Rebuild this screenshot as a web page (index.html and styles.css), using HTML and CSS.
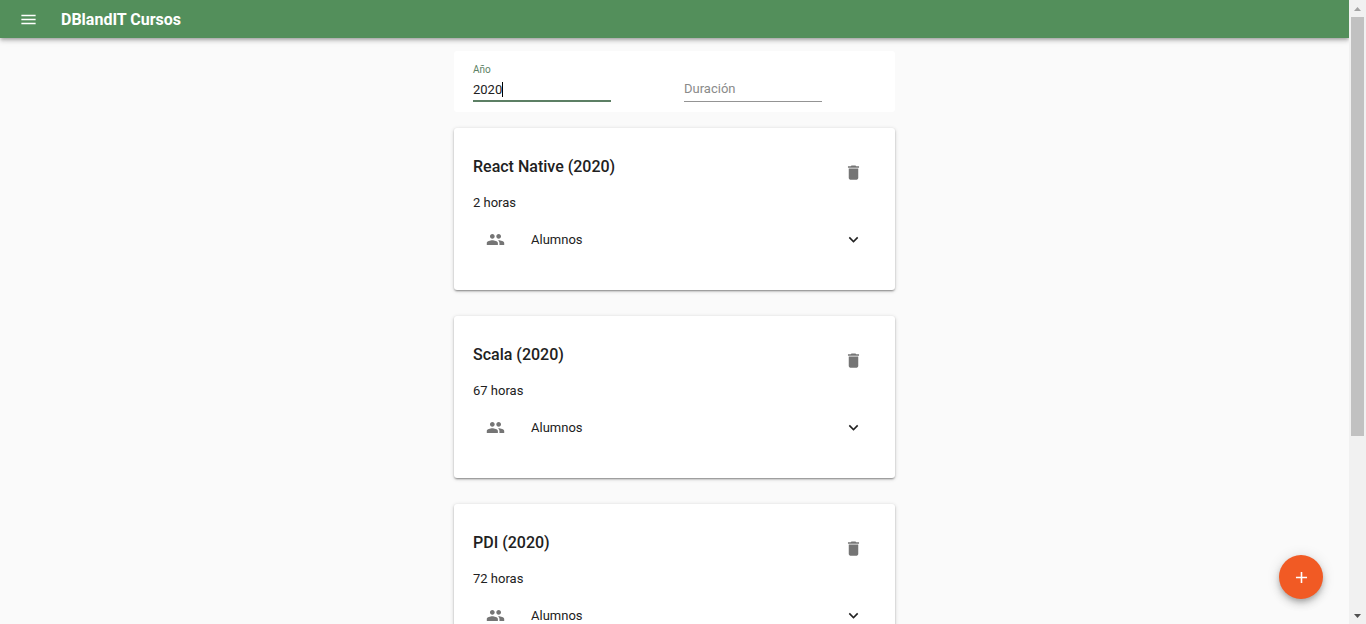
FILE: index.html
```html
<!DOCTYPE html>
<html lang="es">
<head>
<meta charset="utf-8">
<title>DBlandIT Cursos</title>
<link rel="stylesheet" href="styles.css">
</head>
<body>
<svg class="sprite" aria-hidden="true">
  <symbol id="trash" viewBox="0 0 24 24"><path d="M6 19c0 1.100.9 2 2 2h8c1.100 0 2-.9 2-2V7H6v12zM19 4h-3.500l-1-1h-5l-1 1H5v2h14V4z"/></symbol>
  <symbol id="people" viewBox="0 0 24 24"><path d="M16 11c1.660 0 2.990-1.340 2.990-3S17.660 5 16 5c-1.660 0-3 1.340-3 3s1.340 3 3 3zm-8 0c1.660 0 2.990-1.340 2.990-3S9.660 5 8 5C6.340 5 5 6.340 5 8s1.340 3 3 3zm0 2c-2.330 0-7 1.170-7 3.500V19h14v-2.500c0-2.330-4.670-3.500-7-3.500zm8 0c-.29 0-.62.020-.97.050 1.160.84 1.970 1.970 1.970 3.450V19h6v-2.500c0-2.330-4.670-3.500-7-3.500z"/></symbol>
  <symbol id="more" viewBox="0 0 24 24"><path d="M16.590 8.590L12 13.170 7.410 8.590 6 10l6 6 6-6z"/></symbol>
</svg>
<div class="shell">
  <div class="page">
    <header class="appbar">
      <button class="icon-button menu" type="button" aria-label="Menú"><svg class="icon" viewBox="0 0 24 24"><path d="M3 18h18v-2H3v2zm0-5h18v-2H3v2zm0-7v2h18V6H3z"/></svg></button>
      <h1 class="brand">DBlandIT Cursos</h1>
    </header>
    <main class="content">
      <form class="filters">
        <div class="field focused">
          <label class="label" for="year">Año</label>
          <input class="input" id="year" type="text" value="2020">
          <span class="caret"></span>
        </div>
        <div class="field">
          <label class="label hidden" for="duration">Duración</label>
          <input class="input" id="duration" type="text" placeholder="Duración">
        </div>
      </form>
      <article class="card">
        <div class="card-head"><h2 class="title">React Native (2020)</h2><button class="icon-button" type="button" aria-label="Eliminar"><svg class="icon"><use href="#trash"/></svg></button></div>
        <p class="hours">2 horas</p>
        <button class="students" type="button"><svg class="icon people"><use href="#people"/></svg><span class="students-label">Alumnos</span><svg class="icon more"><use href="#more"/></svg></button>
      </article>
      <article class="card">
        <div class="card-head"><h2 class="title">Scala (2020)</h2><button class="icon-button" type="button" aria-label="Eliminar"><svg class="icon"><use href="#trash"/></svg></button></div>
        <p class="hours">67 horas</p>
        <button class="students" type="button"><svg class="icon people"><use href="#people"/></svg><span class="students-label">Alumnos</span><svg class="icon more"><use href="#more"/></svg></button>
      </article>
      <article class="card">
        <div class="card-head"><h2 class="title">PDI (2020)</h2><button class="icon-button" type="button" aria-label="Eliminar"><svg class="icon"><use href="#trash"/></svg></button></div>
        <p class="hours">72 horas</p>
        <button class="students" type="button"><svg class="icon people"><use href="#people"/></svg><span class="students-label">Alumnos</span><svg class="icon more"><use href="#more"/></svg></button>
      </article>
    </main>
    <button class="fab" type="button" aria-label="Agregar curso"><svg class="icon" viewBox="0 0 24 24"><path d="M19 13h-6v6h-2v-6H5v-2h6V5h2v6h6v2z"/></svg></button>
  </div>
  <div class="scrollbar" aria-hidden="true">
    <svg class="arrow up" viewBox="0 0 17 17"><path d="M5 11L8.500 7L12 11z"/></svg>
    <div class="track"><div class="thumb"></div></div>
    <svg class="arrow" viewBox="0 0 17 17"><path d="M5 7L8.500 11L12 7z"/></svg>
  </div>
</div>
</body>
</html>
```
FILE: styles.css
```css
* { box-sizing: border-box; }

body {
  margin: 0;
  background: #fafafa;
  color: #212121;
  font-family: Roboto, "Liberation Sans", sans-serif;
  font-size: 13px;
  line-height: 20px;
}

button, input { font: inherit; color: inherit; border: 0; background: none; padding: 0; }
button { cursor: pointer; }
h1, h2, p { margin: 0; }

.sprite { position: absolute; width: 0; height: 0; }

.shell { display: flex; height: 100vh; }
.page { position: relative; flex: 1; min-width: 0; overflow: hidden; }

.icon { display: block; width: 19px; height: 19px; fill: currentColor; flex: none; }

.appbar {
  display: flex;
  align-items: center;
  gap: 23px;
  height: 38px;
  padding: 0 19px;
  background: #538f5b;
  color: #fff;
  box-shadow: 0 2px 3px -1px rgba(0, 0, 0, .2), 0 3px 4px rgba(0, 0, 0, .14), 0 1px 8px rgba(0, 0, 0, .12);
}
.brand { font-size: 16px; line-height: 21px; font-weight: 700; }

.content { width: 441px; max-width: 100%; margin: 0 auto; padding-top: 13px; }

.filters {
  display: grid;
  grid-template-columns: 1fr 1fr;
  gap: 0 20px;
  padding: 11px 20px 10px 19px;
  margin-bottom: 16px;
  border-radius: 3px;
  background: #fff;
}
.field { position: relative; width: 138px; }
.label { display: block; height: 16px; font-size: 10px; line-height: 16px; color: #5c7f64; }
.hidden { visibility: hidden; }
.input { display: block; width: 100%; height: 24px; padding-bottom: 2px; border-bottom: 1px solid #949494; border-radius: 0; outline: 0; }
.input::placeholder { color: #8a8a8a; opacity: 1; }
.focused .input { padding-bottom: 0; border-bottom: 2px solid #5c7f64; }
.caret { position: absolute; left: 29px; top: 20px; width: 1px; height: 15px; background: #000; }

.card {
  min-height: 162px;
  padding: 26px 19px;
  margin-bottom: 26px;
  border-radius: 3px;
  background: #fff;
  box-shadow: 0 2px 2px -1px rgba(0, 0, 0, .24), 0 1px 2px rgba(0, 0, 0, .2), 0 1px 4px rgba(0, 0, 0, .16);
}
.card-head { display: flex; justify-content: space-between; padding-right: 13px; }
.title { font-size: 16px; line-height: 26px; font-weight: 500; }
.icon-button { display: block; color: #757575; }
.card-head .icon-button { padding-top: 9px; }
.appbar .menu { color: #fff; }
.hours { margin-top: 11px; }
.students { display: flex; align-items: center; width: 100%; margin-top: 12px; padding: 4px 13px; text-align: left; }
.people { color: #757575; }
.students-label { flex: 1; padding-left: 26px; line-height: 21px; }

.fab {
  position: absolute;
  right: 26px;
  bottom: 25px;
  display: grid;
  place-items: center;
  width: 44px;
  height: 44px;
  border-radius: 50%;
  background: #f15a24;
  color: #fff;
  box-shadow: 0 3px 5px -1px rgba(0, 0, 0, .2), 0 5px 8px rgba(0, 0, 0, .14), 0 1px 14px rgba(0, 0, 0, .12);
}

.scrollbar { display: flex; flex-direction: column; width: 17px; background: #f1f1f1; }
.arrow { display: block; width: 17px; height: 17px; fill: #505050; }
.up { fill: #a3a3a3; }
.track { flex: 1; padding: 0 2px; }
.thumb { height: 71%; background: #c1c1c1; }
```
